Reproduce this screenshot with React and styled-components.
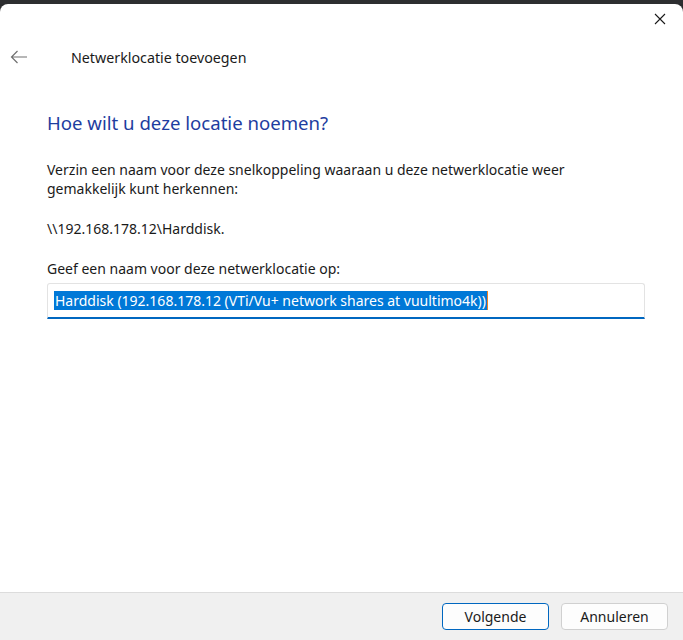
import React from "react";
import styled, { createGlobalStyle } from "styled-components";

const GlobalStyle = createGlobalStyle`
  html, body {
    margin: 0;
    padding: 0;
    background: #2a2b2d;
  }
  body {
    font-family: "Noto Sans", "Open Sans", "Liberation Sans", sans-serif;
    color: #1a1a1a;
  }
`;

const Screen = styled.div`
  width: 683px;
  height: 640px;
  display: flex;
  flex-direction: column;
  background: #2a2b2d;
  overflow: hidden;
`;

const BehindStrip = styled.div`
  height: 4px;
  flex: none;
  background: #2d2e30;
`;

const Window = styled.div`
  flex: 1;
  display: flex;
  flex-direction: column;
  background: #ffffff;
  border-radius: 8px 8px 0 0;
  overflow: hidden;
`;

const TitleBar = styled.div`
  height: 30px;
  display: flex;
  justify-content: flex-end;
`;

const CloseButton = styled.button`
  width: 46px;
  height: 30px;
  border: none;
  background: transparent;
  display: flex;
  align-items: center;
  justify-content: center;
  padding: 0;
`;

const Header = styled.div`
  height: 40px;
  margin-top: 3px;
  display: flex;
  align-items: center;
  padding-left: 8px;
  gap: 26px;
`;

const BackButton = styled.button`
  width: 22px;
  height: 22px;
  border: none;
  background: transparent;
  padding: 0;
  display: flex;
  align-items: center;
  justify-content: center;
`;

const WizardTitle = styled.div`
  font-size: 14.25px;
  color: #1a1a1a;
  padding-left: 15px;
`;

const Content = styled.div`
  flex: 1;
  padding: 34px 30px 0 47px;
  display: flex;
  flex-direction: column;
`;

const Heading = styled.h1`
  margin: 0 0 25px;
  font-size: 18.6px;
  font-weight: 400;
  color: #1e3d9f;
  line-height: 24px;
`;

const Paragraph = styled.p`
  margin: 0 0 ${(p) => p.$gap || 21}px;
  font-size: 14px;
  line-height: 19px;
  color: #1a1a1a;
`;

const NameField = styled.div`
  height: 33px;
  margin-right: 8px;
  border: 1px solid #e3e3e3;
  border-bottom: 2px solid #0067c0;
  border-radius: 3px 3px 0 0;
  display: flex;
  align-items: center;
  padding-left: 6px;
  margin-top: -5px;
`;

const Selected = styled.span`
  background: #0078d7;
  color: #ffffff;
  font-size: 14px;
  line-height: 19px;
  padding: 0 1px;
  border-right: 1px solid #f08020;
`;

const Footer = styled.div`
  height: 47px;
  flex: none;
  background: #f0f0f0;
  border-top: 1px solid #dcdcdc;
  display: flex;
  justify-content: flex-end;
  align-items: center;
  gap: 12px;
  padding-right: 15px;
`;

const DialogButton = styled.button`
  width: 107px;
  height: 27px;
  border-radius: 4px;
  background: #fdfdfd;
  border: 1px solid ${(p) => (p.$primary ? "#0067c0" : "#d0d0d0")};
  font-family: inherit;
  font-size: 14px;
  color: #1a1a1a;
  padding: 0;
`;

const App = () => {
  return (
    <>
      <GlobalStyle />
      <Screen>
        <BehindStrip />
        <Window>
          <TitleBar>
            <CloseButton aria-label="Sluiten">
              <svg width="12" height="12" viewBox="0 0 12 12">
                <path d="M1 1 L11 11 M11 1 L1 11" stroke="#1a1a1a" strokeWidth="1.1" />
              </svg>
            </CloseButton>
          </TitleBar>
          <Header>
            <BackButton aria-label="Terug">
              <svg width="18" height="14" viewBox="0 0 18 14">
                <path
                  d="M17 7 H1.5 M7.5 1 L1.5 7 L7.5 13"
                  stroke="#707070"
                  strokeWidth="1.2"
                  fill="none"
                />
              </svg>
            </BackButton>
            <WizardTitle>Netwerklocatie toevoegen</WizardTitle>
          </Header>
          <Content>
            <Heading>Hoe wilt u deze locatie noemen?</Heading>
            <Paragraph>
              Verzin een naam voor deze snelkoppeling waaraan u deze netwerklocatie weer
              <br />
              gemakkelijk kunt herkennen:
            </Paragraph>
            <Paragraph>\\192.168.178.12\Harddisk.</Paragraph>
            <Paragraph $gap={10}>Geef een naam voor deze netwerklocatie op:</Paragraph>
            <NameField>
              <Selected>Harddisk (192.168.178.12 (VTi/Vu+ network shares at vuultimo4k))</Selected>
            </NameField>
          </Content>
          <Footer>
            <DialogButton $primary>Volgende</DialogButton>
            <DialogButton>Annuleren</DialogButton>
          </Footer>
        </Window>
      </Screen>
    </>
  );
};

export default App;
